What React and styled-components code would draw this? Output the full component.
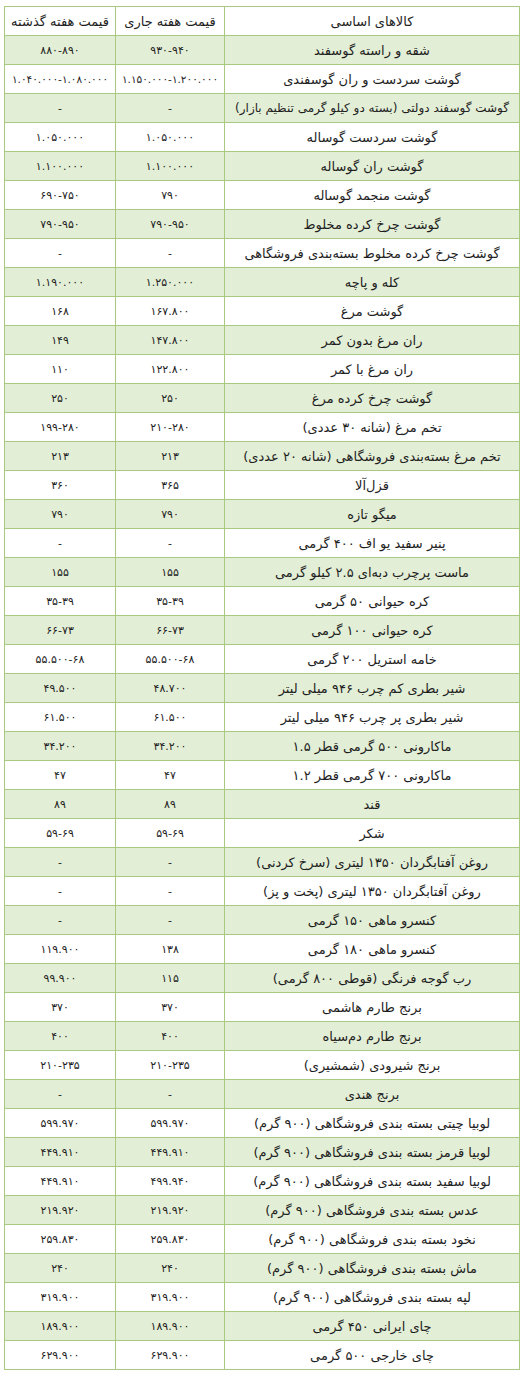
import React from "react";
import styled, { createGlobalStyle } from "styled-components";

const GlobalStyle = createGlobalStyle`
  body {
    margin: 0;
    background: #ffffff;
    font-family: "DejaVu Sans", sans-serif;
  }
`;

const Page = styled.div`
  padding: 6px 8px 0 5px;
  direction: rtl;
`;

const Table = styled.table`
  width: 515px;
  border-collapse: collapse;
  table-layout: fixed;
  color: #1e1e1e;
`;

const HeadCell = styled.th`
  height: 28px;
  padding: 0 4px;
  border: 1px solid #a8c97f;
  background: #ffffff;
  font-weight: normal;
  font-size: 13px;
  text-align: center;
  white-space: nowrap;
`;

const Row = styled.tr`
  background: ${(p) => (p.$shade ? "#e3eed6" : "#ffffff")};
`;

const Cell = styled.td`
  height: 28px;
  padding: 0 ${(p) => (p.$num ? "1px" : "3px")};
  border: 1px solid #a8c97f;
  text-align: center;
  vertical-align: middle;
  white-space: nowrap;
  font-size: ${(p) => (p.$num ? (p.$long ? "10.5px" : "11px") : p.$long ? "12px" : "13px")};
`;

// [کالا, قیمت هفته جاری, قیمت هفته گذشته]
const rows = [
  ["شقه و راسته گوسفند", "۹۳۰-۹۴۰", "۸۸۰-۸۹۰"],
  ["گوشت سردست و ران گوسفندی", "۱.۱۵۰.۰۰۰-۱.۲۰۰.۰۰۰", "۱.۰۴۰.۰۰۰-۱.۰۸۰.۰۰۰"],
  ["گوشت گوسفند دولتی (بسته دو کیلو گرمی تنظیم بازار)", "-", "-"],
  ["گوشت سردست گوساله", "۱.۰۵۰.۰۰۰", "۱.۰۵۰.۰۰۰"],
  ["گوشت ران گوساله", "۱.۱۰۰.۰۰۰", "۱.۱۰۰.۰۰۰"],
  ["گوشت منجمد گوساله", "۷۹۰", "۶۹۰-۷۵۰"],
  ["گوشت چرخ کرده مخلوط", "۷۹۰-۹۵۰", "۷۹۰-۹۵۰"],
  ["گوشت چرخ کرده مخلوط بسته‌بندی فروشگاهی", "-", "-"],
  ["کله و پاچه", "۱.۲۵۰.۰۰۰", "۱.۱۹۰.۰۰۰"],
  ["گوشت مرغ", "۱۶۷.۸۰۰", "۱۶۸"],
  ["ران مرغ بدون کمر", "۱۴۷.۸۰۰", "۱۴۹"],
  ["ران مرغ با کمر", "۱۲۲.۸۰۰", "۱۱۰"],
  ["گوشت چرخ کرده مرغ", "۲۵۰", "۲۵۰"],
  ["تخم مرغ (شانه ۳۰ عددی)", "۲۱۰-۲۸۰", "۱۹۹-۲۸۰"],
  ["تخم مرغ بسته‌بندی فروشگاهی (شانه ۲۰ عددی)", "۲۱۳", "۲۱۳"],
  ["قزل‌آلا", "۳۶۵", "۳۶۰"],
  ["میگو تازه", "۷۹۰", "۷۹۰"],
  ["پنیر سفید یو اف ۴۰۰ گرمی", "-", "-"],
  ["ماست پرچرب دبه‌ای ۲.۵ کیلو گرمی", "۱۵۵", "۱۵۵"],
  ["کره حیوانی ۵۰ گرمی", "۳۵-۳۹", "۳۵-۳۹"],
  ["کره حیوانی ۱۰۰ گرمی", "۶۶-۷۳", "۶۶-۷۳"],
  ["خامه استریل ۲۰۰ گرمی", "۵۵.۵۰۰-۶۸", "۵۵.۵۰۰-۶۸"],
  ["شیر بطری کم چرب ۹۴۶ میلی لیتر", "۴۸.۷۰۰", "۴۹.۵۰۰"],
  ["شیر بطری پر چرب ۹۴۶ میلی لیتر", "۶۱.۵۰۰", "۶۱.۵۰۰"],
  ["ماکارونی ۵۰۰ گرمی قطر ۱.۵", "۳۴.۲۰۰", "۳۴.۲۰۰"],
  ["ماکارونی ۷۰۰ گرمی قطر ۱.۲", "۴۷", "۴۷"],
  ["قند", "۸۹", "۸۹"],
  ["شکر", "۵۹-۶۹", "۵۹-۶۹"],
  ["روغن آفتابگردان ۱۳۵۰ لیتری (سرخ کردنی)", "-", "-"],
  ["روغن آفتابگردان ۱۳۵۰ لیتری (پخت و پز)", "-", "-"],
  ["کنسرو ماهی ۱۵۰ گرمی", "-", "-"],
  ["کنسرو ماهی ۱۸۰ گرمی", "۱۳۸", "۱۱۹.۹۰۰"],
  ["رب گوجه فرنگی (قوطی ۸۰۰ گرمی)", "۱۱۵", "۹۹.۹۰۰"],
  ["برنج طارم هاشمی", "۳۷۰", "۳۷۰"],
  ["برنج طارم دم‌سیاه", "۴۰۰", "۴۰۰"],
  ["برنج شیرودی (شمشیری)", "۲۱۰-۲۳۵", "۲۱۰-۲۳۵"],
  ["برنج هندی", "-", "-"],
  ["لوبیا چیتی بسته بندی فروشگاهی (۹۰۰ گرم)", "۵۹۹.۹۷۰", "۵۹۹.۹۷۰"],
  ["لوبیا قرمز بسته بندی فروشگاهی (۹۰۰ گرم)", "۴۴۹.۹۱۰", "۴۴۹.۹۱۰"],
  ["لوبیا سفید بسته بندی فروشگاهی (۹۰۰ گرم)", "۴۹۹.۹۴۰", "۴۴۹.۹۱۰"],
  ["عدس بسته بندی فروشگاهی (۹۰۰ گرم)", "۲۱۹.۹۲۰", "۲۱۹.۹۲۰"],
  ["نخود بسته بندی فروشگاهی (۹۰۰ گرم)", "۲۵۹.۸۳۰", "۲۵۹.۸۳۰"],
  ["ماش بسته بندی فروشگاهی (۹۰۰ گرم)", "۲۴۰", "۲۴۰"],
  ["لپه بسته بندی فروشگاهی (۹۰۰ گرم)", "۳۱۹.۹۰۰", "۳۱۹.۹۰۰"],
  ["چای ایرانی ۴۵۰ گرمی", "۱۸۹.۹۰۰", "۱۸۹.۹۰۰"],
  ["چای خارجی ۵۰۰ گرمی", "۶۲۹.۹۰۰", "۶۲۹.۹۰۰"],
];

export default function App() {
  return (
    <>
      <GlobalStyle />
      <Page>
        <Table>
          <colgroup>
            <col style={{ width: 295 }} />
            <col style={{ width: 109 }} />
            <col style={{ width: 111 }} />
          </colgroup>
          <thead>
            <tr>
              <HeadCell>کالاهای اساسی</HeadCell>
              <HeadCell>قیمت هفته جاری</HeadCell>
              <HeadCell>قیمت هفته گذشته</HeadCell>
            </tr>
          </thead>
          <tbody>
            {rows.map(([name, now, prev], i) => (
              <Row key={i} $shade={i % 2 === 0}>
                <Cell $long={name.length > 44}>{name}</Cell>
                <Cell $num $long={now.length > 12}>{now}</Cell>
                <Cell $num $long={prev.length > 12}>{prev}</Cell>
              </Row>
            ))}
          </tbody>
        </Table>
      </Page>
    </>
  );
}
